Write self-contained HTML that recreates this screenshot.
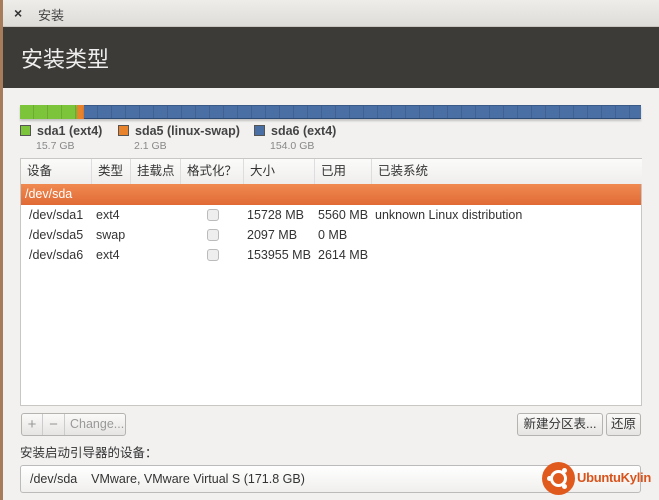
<!DOCTYPE html>
<html><head><meta charset="utf-8"><style>
*{margin:0;padding:0;box-sizing:border-box}
body{width:659px;height:500px;overflow:hidden;background:#f2f1f0;font-family:"Liberation Sans","Noto Sans CJK SC",sans-serif;font-size:12px;color:#3c3c3c;position:relative}
.abs{position:absolute}
#edge{left:0;top:0;width:3px;height:500px;background:#a67c5a}
#tb{left:3px;top:0;right:0;height:27px;background:linear-gradient(#efedea,#dedcd8);border-bottom:1px solid #c8c5c0}
#hd{left:3px;top:27px;right:0;height:61px;background:#3c3b37}
#hd span{position:absolute;left:18px;top:15px;font-size:22px;color:#eee}
.bar{top:105px;height:14px;box-shadow:0 2px 2px rgba(0,0,0,.2)}
.seg{background-image:repeating-linear-gradient(90deg,transparent 0 13px,rgba(0,0,0,.12) 13px 14px)}
.leg{top:124px;font-size:12.5px;font-weight:bold;color:#444}
.sq{display:inline-block;width:11px;height:11px;border:1px solid #555;vertical-align:-1px;margin-right:6px}
.sub{font-size:10.5px;color:#888;font-weight:normal}
#tbl{left:20px;top:158px;width:622px;height:248px;background:#fff;border:1px solid #c9c7c4}
.th{position:absolute;top:0;height:25px;line-height:25px;padding-left:6px;border-right:1px solid #ddd;background:linear-gradient(#fbfbfa,#efeeec);font-size:12.5px;color:#333}
.row{position:absolute;left:0;right:0;height:20px;line-height:20px;font-size:12.5px;color:#333}
.row span{position:absolute}
.cb{position:absolute;width:12px;height:12px;border:1px solid #bbb;border-radius:3px;background:#eee;top:4px;left:186px}
.btn{position:absolute;height:23px;line-height:21px;border:1px solid #b5b3b0;border-radius:3px;background:linear-gradient(#fafaf9,#e6e5e3);font-size:12.5px;text-align:center;color:#333}
</style></head><body>
<div class="abs" id="edge"></div>
<div class="abs" id="tb"><span class="abs" style="left:11px;top:5px;font-size:14px;font-weight:bold;color:#333">×</span><span class="abs" style="left:35px;top:5px;font-size:13px;color:#444">安装</span></div>
<div class="abs" id="hd"><span>安装类型</span></div>

<div class="abs bar seg" style="left:20px;width:57px;background-color:#7cc43a"></div>
<div class="abs bar" style="left:77px;width:7px;background:#e8832c"></div>
<div class="abs bar seg" style="left:84px;width:557px;background-color:#4a6fa5;border-top:1px solid #3a5a88;border-bottom:1px solid #2d4a75"></div>

<div class="abs leg" style="left:20px"><span class="sq" style="background:#7cc43a"></span>sda1 (ext4)<br><span class="sub" style="margin-left:16px">15.7 GB</span></div>
<div class="abs leg" style="left:118px"><span class="sq" style="background:#e8832c"></span>sda5 (linux-swap)<br><span class="sub" style="margin-left:16px">2.1 GB</span></div>
<div class="abs leg" style="left:254px"><span class="sq" style="background:#4a6fa5"></span>sda6 (ext4)<br><span class="sub" style="margin-left:16px">154.0 GB</span></div>

<div class="abs" id="tbl">
<div class="th" style="left:0;width:71px">设备</div>
<div class="th" style="left:71px;width:39px">类型</div>
<div class="th" style="left:110px;width:50px">挂载点</div>
<div class="th" style="left:160px;width:63px">格式化？</div>
<div class="th" style="left:223px;width:71px">大小</div>
<div class="th" style="left:294px;width:57px">已用</div>
<div class="th" style="left:351px;width:270px;border-right:none">已装系统</div>
<div class="row" style="top:25px;height:21px;background:linear-gradient(#f08a50,#e06a36);color:#fff"><span style="left:4px">/dev/sda</span></div>
<div class="row" style="top:46px"><span style="left:8px">/dev/sda1</span><span style="left:75px">ext4</span><div class="cb"></div><span style="left:226px">15728 MB</span><span style="left:297px">5560 MB</span><span style="left:354px">unknown Linux distribution</span></div>
<div class="row" style="top:66px"><span style="left:8px">/dev/sda5</span><span style="left:75px">swap</span><div class="cb"></div><span style="left:226px">2097 MB</span><span style="left:297px">0 MB</span></div>
<div class="row" style="top:86px"><span style="left:8px">/dev/sda6</span><span style="left:75px">ext4</span><div class="cb"></div><span style="left:226px">153955 MB</span><span style="left:297px">2614 MB</span></div>
</div>

<div class="btn" style="left:21px;top:413px;width:105px;color:#999;overflow:hidden;text-align:left">
<span style="position:absolute;left:0;width:21px;height:21px;text-align:center;font-size:15px;border-right:1px solid #ccc">+</span>
<span style="position:absolute;left:21px;width:22px;height:21px;text-align:center;font-size:15px;border-right:1px solid #ccc">−</span>
<span style="position:absolute;left:48px">Change...</span></div>
<div class="btn" style="left:517px;top:413px;width:86px">新建分区表...</div>
<div class="btn" style="left:606px;top:413px;width:35px">还原</div>

<div class="abs" style="left:20px;top:442px;font-size:12.5px;color:#333">安装启动引导器的设备：</div>
<div class="abs" style="left:20px;top:465px;width:621px;height:28px;border:1px solid #bbb;border-radius:3px;background:linear-gradient(#fff,#f0efed);font-size:12.5px;line-height:26px;color:#333;padding-left:9px">/dev/sda&nbsp;&nbsp;&nbsp;&nbsp;VMware, VMware Virtual S (171.8 GB)</div>
<div class="abs" style="left:542px;top:462px;width:33px;height:33px;border-radius:50%;background:#e05a1e">
<div class="abs" style="left:8px;top:8px;width:17px;height:17px;border:3px solid #fff;border-radius:50%"></div>
<div class="abs" style="left:5px;top:14px;width:5px;height:5px;border-radius:50%;background:#fff"></div>
<div class="abs" style="left:20px;top:6px;width:5px;height:5px;border-radius:50%;background:#fff"></div>
<div class="abs" style="left:20px;top:22px;width:5px;height:5px;border-radius:50%;background:#fff"></div>
</div>
<div class="abs" style="left:577px;top:470px;font-size:13px;color:#d8541c;font-weight:bold;letter-spacing:-0.3px">UbuntuKylin</div>
</body></html>
